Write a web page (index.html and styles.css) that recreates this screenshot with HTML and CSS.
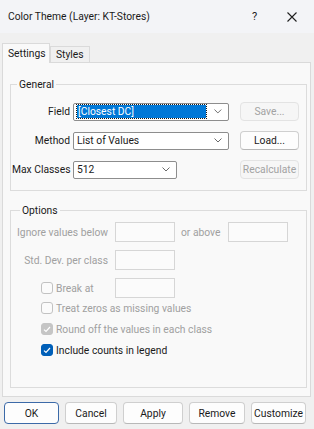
FILE: index.html
```html
<!DOCTYPE html>
<html lang="en">

<head>
    <meta charset="UTF-8">
    <meta name="viewport" content="width=device-width, initial-scale=1.0">
    <title>Color Theme (Layer: KT-Stores)</title>
    <link rel="stylesheet" href="styles.css">
</head>

<body>
    <div class="titlebar">
        <span class="title">Color Theme (Layer: KT-Stores)</span>
        <span class="help">?</span>
        <span class="close">
            <svg width="10" height="10" viewBox="0 0 10 10"><path d="M0.5 0.5 L9.5 9.5 M9.5 0.5 L0.5 9.5" stroke="#1f1f1f" stroke-width="1.1" fill="none"/></svg>
        </span>
    </div>

    <div class="tabs">
        <div class="tab active">Settings</div>
        <div class="tab">Styles</div>
    </div>

    <div class="panel">
        <fieldset class="group general">
            <legend>General</legend>
            <div class="form-grid">
                <label class="lbl">Field</label>
                <div class="combo wide focused">
                    <span class="sel">[Closest DC]</span>
                    <svg class="chev" width="8" height="5" viewBox="0 0 8 5"><path d="M0.5 0.5 L4 4 L7.5 0.5" stroke="#6a6a6a" fill="none"/></svg>
                </div>
                <button class="btn side" disabled>Save...</button>

                <label class="lbl">Method</label>
                <div class="combo wide">
                    <span class="val">List of Values</span>
                    <svg class="chev" width="8" height="5" viewBox="0 0 8 5"><path d="M0.5 0.5 L4 4 L7.5 0.5" stroke="#6a6a6a" fill="none"/></svg>
                </div>
                <button class="btn side">Load...</button>

                <label class="lbl">Max Classes</label>
                <div class="combo narrow">
                    <span class="val">512</span>
                    <svg class="chev" width="8" height="5" viewBox="0 0 8 5"><path d="M0.5 0.5 L4 4 L7.5 0.5" stroke="#6a6a6a" fill="none"/></svg>
                </div>
                <button class="btn side" disabled>Recalculate</button>
            </div>
        </fieldset>

        <fieldset class="group options">
            <legend>Options</legend>
            <div class="row">
                <span class="olbl dim">Ignore values below</span>
                <span class="textbox"></span>
                <span class="dim above">or above</span>
                <span class="textbox second"></span>
            </div>
            <div class="row">
                <span class="olbl dim">Std. Dev. per class</span>
                <span class="textbox"></span>
            </div>
            <div class="row break-row">
                <span class="olbl check-cell">
                    <span class="check"></span>
                    <span class="dim">Break at</span>
                </span>
                <span class="textbox"></span>
            </div>
            <div class="check-row">
                <span class="check"></span>
                <span class="dim">Treat zeros as missing values</span>
            </div>
            <div class="check-row">
                <span class="check checked disabled">
                    <svg width="8" height="7" viewBox="0 0 8 7"><path d="M1 3.6 L3 5.5 L7 1" stroke="#fff" stroke-width="1.2" fill="none"/></svg>
                </span>
                <span class="dim">Round off the values in each class</span>
            </div>
            <div class="check-row">
                <span class="check checked">
                    <svg width="8" height="7" viewBox="0 0 8 7"><path d="M1 3.6 L3 5.5 L7 1" stroke="#fff" stroke-width="1.2" fill="none"/></svg>
                </span>
                <span>Include counts in legend</span>
            </div>
        </fieldset>
    </div>

    <div class="actions">
        <button class="btn default ok">OK</button>
        <button class="btn cancel">Cancel</button>
        <button class="btn apply">Apply</button>
        <button class="btn remove">Remove</button>
        <button class="btn customize">Customize</button>
    </div>
</body>

</html>
```

FILE: styles.css
```css
body {
    margin: 0;
    width: 314px;
    height: 429px;
    overflow: hidden;
    background-color: #f0f0f0;
    font-family: Roboto, "Noto Sans", sans-serif;
    font-size: 10.3px;
    color: #1a1a1a;
}

.titlebar {
    height: 33px;
    display: flex;
    align-items: center;
    padding-left: 8px;
    background-color: #f3f4f7;
    font-size: 10.3px;
}

.title {
    flex: 1;
}

.help {
    width: 8px;
    margin-right: 27px;
    font-size: 11px;
}

.close {
    display: flex;
    margin-right: 17px;
}

.tabs {
    display: flex;
    align-items: flex-end;
    margin-top: 10px;
    padding-left: 2px;
    height: 19px;
    position: relative;
    z-index: 1;
}

.tab {
    height: 16px;
    line-height: 15px;
    padding: 0 5px;
    box-sizing: border-box;
    border: 1px solid #dadada;
    border-bottom: none;
    background-color: #f0f0f0;
    width: 40px;
}

.tab.active {
    height: 20px;
    width: 48px;
    line-height: 19px;
    padding: 0 5px;
    background-color: #f9f9f9;
    margin-bottom: -1px;
}

.panel {
    box-sizing: border-box;
    width: 309px;
    height: 335px;
    margin-left: 2px;
    border: 1px solid #dadada;
    background-color: #f9f9f9;
    display: flex;
    flex-direction: column;
    padding: 15px 3px 8px 7px;
}

.group {
    margin: 0;
    border: 1px solid #dcdcdc;
    padding: 0 4px;
}

.group legend {
    padding: 0 2px;
    margin-left: 5px;
}

.general {
    height: 113px;
    box-sizing: border-box;
    padding: 11px 4px 0 1px;
}

.form-grid {
    display: grid;
    grid-template-columns: 58px 157px 1fr;
    column-gap: 3px;
    row-gap: 10px;
    align-items: center;
}

.lbl {
    text-align: right;
    white-space: nowrap;
}

.combo {
    height: 18px;
    box-sizing: border-box;
    border: 1px solid #8d8d8d;
    border-radius: 2px;
    background-color: #fff;
    display: flex;
    align-items: center;
    padding: 0 3px;
}

.combo.wide {
    width: 156px;
}

.combo.narrow {
    width: 104px;
}

.combo .val {
    flex: 1;
}

.combo .chev {
    margin-right: 3px;
}

.sel {
    width: 133px;
    height: 13px;
    line-height: 13px;
    margin-right: 8px;
    background-color: #0078d7;
    color: #fff;
    outline: 1px dotted #1a1a1a;
    padding-left: 1px;
}

.btn {
    font-family: inherit;
    font-size: 10.3px;
    color: #1a1a1a;
    background-color: #fdfdfd;
    border: 1px solid #cfcfcf;
    border-bottom-color: #b8b8b8;
    border-radius: 4px;
    padding: 0;
    height: 19px;
}

.btn:disabled {
    color: #a2a2a2;
    background-color: #f6f6f6;
    border-color: #e3e3e3;
}

.btn.side {
    width: 59px;
    margin-left: 7px;
}

.options {
    flex: 1;
    margin-top: 13px;
    padding-top: 5px;
}

.row {
    display: flex;
    align-items: center;
    height: 20px;
    margin-bottom: 8px;
}

.row.break-row {
    margin-bottom: 2px;
}

.olbl {
    width: 96px;
    margin-left: -3px;
    text-align: right;
    white-space: nowrap;
    margin-right: 7px;
}

.dim {
    color: #a0a0a0;
}

.textbox {
    width: 60px;
    height: 20px;
    box-sizing: border-box;
    border: 1px solid #d6d6d6;
    background-color: #fbfbfb;
}

.above {
    margin: 0 8px 0 6px;
}

.check-cell {
    display: flex;
    align-items: center;
    text-align: left;
    padding-left: 29px;
    box-sizing: border-box;
}

.check-row {
    display: flex;
    align-items: center;
    height: 16px;
    margin-bottom: 5px;
    padding-left: 26px;
}

.check {
    width: 12px;
    height: 12px;
    box-sizing: border-box;
    border: 1px solid #c2c2c2;
    border-radius: 3px;
    background-color: #fbfbfb;
    margin-right: 3px;
    display: flex;
    align-items: center;
    justify-content: center;
}

.check.checked {
    background-color: #005fb8;
    border-color: #005fb8;
}

.check.checked.disabled {
    background-color: #c5c5c5;
    border-color: #c5c5c5;
}

.actions {
    display: flex;
    gap: 6px;
    margin-top: 5px;
    padding-left: 4px;
}

.actions .btn {
    height: 22px;
}

.btn.default {
    border: 1px solid #3c6aa8;
}

.ok { width: 55px; }
.cancel { width: 52px; }
.apply { width: 60px; }
.remove { width: 56px; }
.customize { width: 55px; }
```
